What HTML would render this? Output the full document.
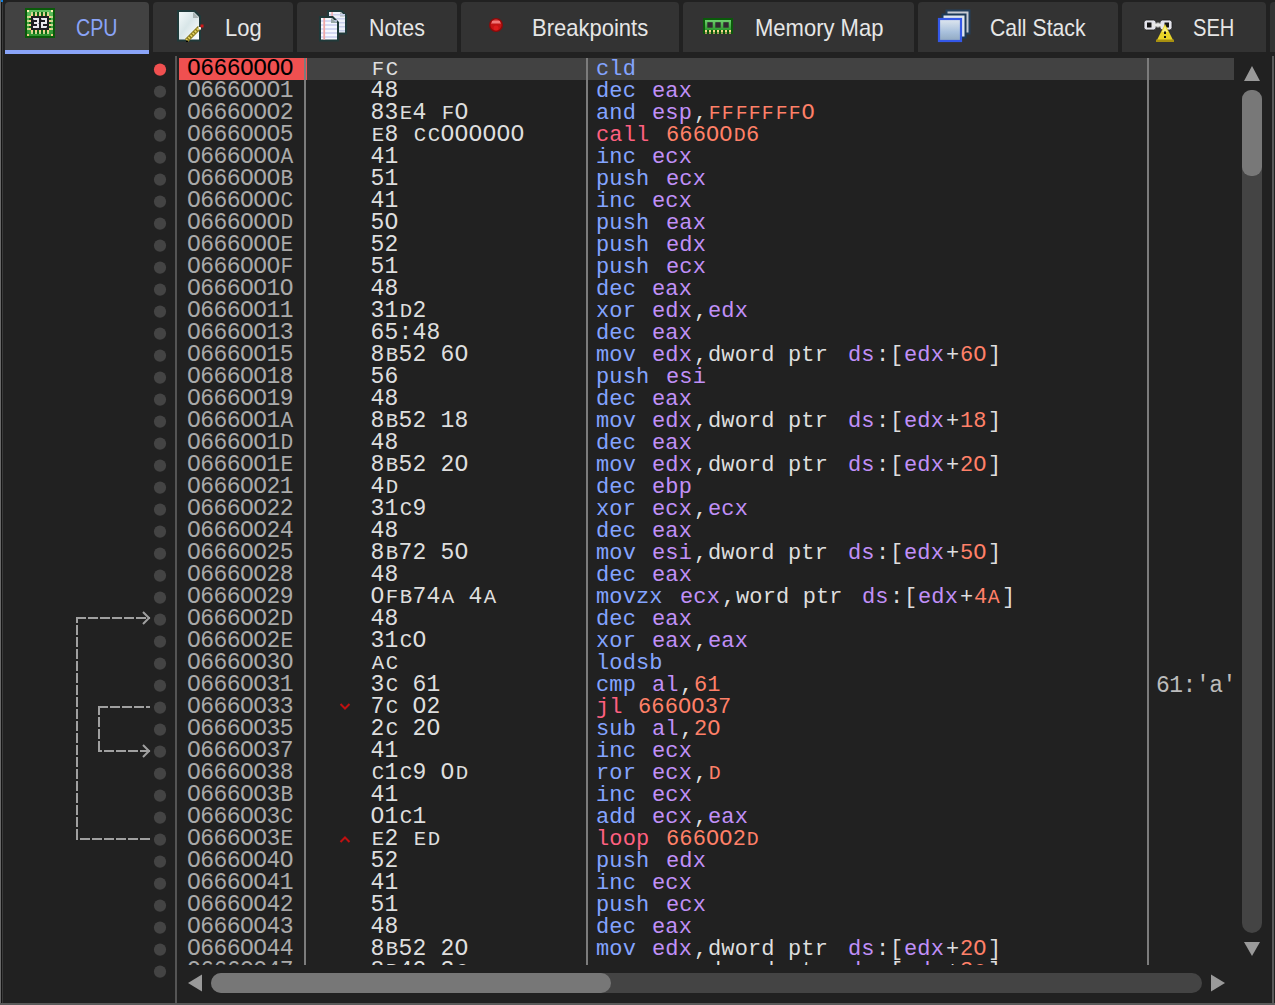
<!DOCTYPE html>
<html><head><meta charset="utf-8">
<style>
html,body{margin:0;padding:0;}
body{width:1275px;height:1005px;background:#212121;position:relative;overflow:hidden;font-family:"Liberation Sans",sans-serif;}
.abs{position:absolute;}
.tab{position:absolute;top:2px;height:50px;background:#333333;border-radius:4px 4px 0 0;}
.tab.act{background:#424242;height:48px;}
.tl{position:absolute;top:15px;font-family:"Liberation Sans",sans-serif;font-size:24px;transform-origin:0 0;line-height:26px;color:#e6e6e6;white-space:pre;}
#tbl{position:absolute;left:0;top:0;width:1240px;height:965px;overflow:hidden;}
.a,.b,.d,.c{position:absolute;font-family:"Liberation Mono",monospace;font-size:23px;line-height:22px;height:22px;white-space:pre;}
.a{left:187px;color:#aaaaaa;letter-spacing:-0.55px;}
.b{left:370.5px;color:#dedede;letter-spacing:0.2px;}
.d{left:596px;color:#dedede;letter-spacing:0.13px;font-size:22px;margin-top:1px;}
.tk{display:inline-block;overflow:visible;}
.sc{display:inline-block;transform:scale(0.9,0.9);transform-origin:50% 17px;}
.a .sc{transform:scale(0.92,0.92);}
.mn{color:#84a4ff;}
.reg{color:#c090f8;}
.num{color:#ff8068;}
.cj{color:#ff6080;}
.pu{color:#dedede;}
</style></head><body>
<!-- left border -->
<div class="abs" style="left:0;top:0;width:1px;height:1005px;background:#6a6a6a"></div>
<div class="abs" style="left:1px;top:0;width:1px;height:1005px;background:#141414"></div>
<div class="abs" style="left:2px;top:0;width:1px;height:1005px;background:#3a3a3a"></div>
<div class="abs" style="left:1px;top:0;width:2px;height:2px;background:#1080e0"></div>
<!-- bottom border / right border -->
<div class="abs" style="left:0;top:1003px;width:1275px;height:2px;background:#5a5a5a"></div>
<div class="abs" style="left:1272px;top:56px;width:1.5px;height:949px;background:#5a5a5a"></div>

<!-- tabs -->
<div class="tab act" style="left:5px;width:144px"></div>
<div class="abs" style="left:5px;top:50px;width:144px;height:4px;background:#8aa4f8"></div>
<div class="tab" style="left:153px;width:140px"></div>
<div class="tab" style="left:297px;width:160px"></div>
<div class="tab" style="left:461px;width:218px"></div>
<div class="tab" style="left:683px;width:231px"></div>
<div class="tab" style="left:918px;width:200px"></div>
<div class="tab" style="left:1122px;width:144px"></div>
<div class="tab" style="left:1270px;width:20px"></div>

<div class="tl" style="left:76px;color:#8aa4f8;transform:scaleX(0.819)">CPU</div>
<div class="tl" style="left:225px;transform:scaleX(0.917)">Log</div>
<div class="tl" style="left:368.5px;transform:scaleX(0.892)">Notes</div>
<div class="tl" style="left:532.2px;transform:scaleX(0.917)">Breakpoints</div>
<div class="tl" style="left:754.5px;transform:scaleX(0.917)">Memory Map</div>
<div class="tl" style="left:990px;transform:scaleX(0.885)">Call Stack</div>
<div class="tl" style="left:1192.8px;transform:scaleX(0.838)">SEH</div>

<!-- icons -->
<svg class="abs" style="left:0;top:0" width="1275" height="56" viewBox="0 0 1275 56">
 <defs>
  <linearGradient id="gpage" x1="0" y1="0" x2="1" y2="1"><stop offset="0" stop-color="#f4fafa"/><stop offset="0.45" stop-color="#d8e6e8"/><stop offset="1" stop-color="#ffffff"/></linearGradient>
  <linearGradient id="gcs" x1="0" y1="0" x2="0" y2="1"><stop offset="0" stop-color="#e0e8f0"/><stop offset="0.6" stop-color="#a8c0dc"/><stop offset="1" stop-color="#90a8c0"/></linearGradient>
  <linearGradient id="gram" x1="0" y1="0" x2="0" y2="1"><stop offset="0" stop-color="#70d070"/><stop offset="1" stop-color="#2e9a2e"/></linearGradient>
  <linearGradient id="gcpu" x1="0" y1="0" x2="0" y2="1"><stop offset="0" stop-color="#60c060"/><stop offset="1" stop-color="#2e942e"/></linearGradient>
 </defs>
 <!-- CPU -->
 <rect x="25" y="8" width="30" height="30" fill="#0a5a0a"/>
 <rect x="27" y="10" width="26" height="26" fill="url(#gcpu)"/>
 <g fill="#0e6a14">
  <rect x="33" y="12" width="2" height="4"/><rect x="37" y="12" width="2" height="4"/><rect x="41" y="12" width="2" height="4"/><rect x="45" y="12" width="2" height="4"/>
  <rect x="33" y="30" width="2" height="4"/><rect x="37" y="30" width="2" height="4"/><rect x="41" y="30" width="2" height="4"/><rect x="45" y="30" width="2" height="4"/>
  <rect x="29" y="18" width="2" height="2"/><rect x="29" y="22" width="2" height="2"/><rect x="29" y="26" width="2" height="2"/>
  <rect x="49" y="18" width="2" height="2"/><rect x="49" y="22" width="2" height="2"/><rect x="49" y="26" width="2" height="2"/>
 </g>
 <g fill="#fff0b0"><rect x="27" y="10" width="2" height="2"/><rect x="51" y="10" width="2" height="2"/></g>
 <g fill="#f0c888"><rect x="27" y="34" width="2" height="2"/><rect x="51" y="34" width="2" height="2"/></g>
 <g fill="#c8d890">
  <rect x="31" y="12" width="2" height="2"/><rect x="35" y="12" width="2" height="2"/><rect x="39" y="12" width="2" height="2"/><rect x="43" y="12" width="2" height="2"/><rect x="47" y="12" width="2" height="2"/>
  <rect x="31" y="32" width="2" height="2"/><rect x="35" y="32" width="2" height="2"/><rect x="39" y="32" width="2" height="2"/><rect x="43" y="32" width="2" height="2"/><rect x="47" y="32" width="2" height="2"/>
  <rect x="27" y="16" width="2" height="2"/><rect x="27" y="20" width="2" height="2"/><rect x="27" y="24" width="2" height="2"/><rect x="27" y="28" width="2" height="2"/>
  <rect x="51" y="16" width="2" height="2"/><rect x="51" y="20" width="2" height="2"/><rect x="51" y="24" width="2" height="2"/><rect x="51" y="28" width="2" height="2"/>
 </g>
 <g fill="#f4d090">
  <rect x="31" y="14" width="2" height="2"/><rect x="35" y="14" width="2" height="2"/><rect x="39" y="14" width="2" height="2"/><rect x="43" y="14" width="2" height="2"/><rect x="47" y="14" width="2" height="2"/>
  <rect x="31" y="30" width="2" height="2"/><rect x="35" y="30" width="2" height="2"/><rect x="39" y="30" width="2" height="2"/><rect x="43" y="30" width="2" height="2"/><rect x="47" y="30" width="2" height="2"/>
  <rect x="29" y="16" width="2" height="2"/><rect x="29" y="20" width="2" height="2"/><rect x="29" y="24" width="2" height="2"/><rect x="29" y="28" width="2" height="2"/>
  <rect x="49" y="16" width="2" height="2"/><rect x="49" y="20" width="2" height="2"/><rect x="49" y="24" width="2" height="2"/><rect x="49" y="28" width="2" height="2"/>
 </g>
 <rect x="31" y="16" width="18" height="14" fill="#1e1e22"/>
 <g fill="#e8e8ec">
  <rect x="33" y="18" width="6" height="2"/><rect x="34" y="22" width="5" height="2"/><rect x="33" y="26" width="6" height="2"/><rect x="37" y="18" width="2" height="10"/>
  <rect x="41" y="18" width="6" height="2"/><rect x="45" y="18" width="2" height="6"/><rect x="41" y="22" width="6" height="2"/><rect x="41" y="22" width="2" height="6"/><rect x="41" y="26" width="6" height="2"/>
 </g>
 <g fill="#9a9aa0"><rect x="33" y="19" width="1" height="1"/><rect x="38" y="23" width="1" height="1"/><rect x="41" y="19" width="1" height="1"/><rect x="46" y="27" width="1" height="1"/></g>
 <!-- Log -->
 <path d="M177 10 H195 L201 16 V41.5 H177 Z" fill="#203a3a"/>
 <path d="M179 12 H194 L199 17 V39.5 H179 Z" fill="url(#gpage)"/>
 <path d="M193 12 V18 H199 Z" fill="#a8b4b4"/>
 <path d="M186.5 40.5 L199.5 27.5" stroke="#8a7a20" stroke-width="4.5"/>
 <path d="M186.5 40.5 L199.5 27.5" stroke="#e8d860" stroke-width="2.5" stroke-dasharray="1.5 1.5"/>
 <rect x="198.5" y="27" width="2.5" height="2.5" fill="#ffffff"/>
 <rect x="200.5" y="24.5" width="3" height="3" fill="#d01818"/>
 <rect x="186" y="40.5" width="2" height="1.5" fill="#000"/>
 <!-- Notes -->
 <path d="M327 10 H342 L347 15 V34.5 H327 Z" fill="#203a3a"/>
 <path d="M329 12 H341 L345 16 V32.5 H329 Z" fill="#eef2fa"/>
 <path d="M340 12 V16.5 H345 Z" fill="#a8b4b4"/>
 <g fill="#c8d0ec"><rect x="329" y="14" width="16" height="1.5"/><rect x="329" y="18" width="16" height="1.5"/><rect x="329" y="22" width="16" height="1.5"/><rect x="329" y="26" width="16" height="1.5"/><rect x="329" y="30" width="16" height="1.5"/></g>
 <rect x="331.3" y="12" width="1.6" height="5" fill="#f0b0b0"/>
 <path d="M319 16 H333 L339 22 V41.5 H319 Z" fill="#203a3a"/>
 <path d="M321 18 H332 L337 23 V39.5 H321 Z" fill="#f6f8ff"/>
 <g fill="#ccd2f0"><rect x="321" y="20.2" width="16" height="1.6"/><rect x="321" y="24.2" width="16" height="1.6"/><rect x="321" y="28.2" width="16" height="1.6"/><rect x="321" y="32.2" width="16" height="1.6"/><rect x="321" y="36.2" width="16" height="1.6"/></g>
 <path d="M331 18 V23 H337 Z" fill="#98a8a8"/>
 <rect x="323.3" y="18" width="1.8" height="21.5" fill="#f0a8a8"/>
 <!-- Breakpoints -->
 <circle cx="496" cy="25" r="7" fill="#8c0a0a"/>
 <circle cx="496" cy="25" r="5.6" fill="#c41414"/>
 <path d="M491 24 A5 4.5 0 0 1 501 24 Z" fill="#d84848"/>
 <rect x="492" y="21" width="8" height="2" fill="#f07878"/>
 <circle cx="496" cy="28" r="2.5" fill="#dc1c1c"/>
 <!-- Memory Map -->
 <rect x="703" y="18" width="30" height="16" fill="#0a5a0a"/>
 <rect x="705" y="20" width="26" height="10" fill="url(#gram)"/>
 <rect x="707.3" y="22.2" width="5.4" height="5.5" fill="#302830"/><rect x="715.3" y="22.2" width="5.4" height="5.5" fill="#302830"/><rect x="723.3" y="22.2" width="5.4" height="5.5" fill="#302830"/>
 <g fill="#f8d890"><rect x="705" y="30" width="2" height="2.5"/><rect x="709" y="30" width="2" height="2.5"/><rect x="713" y="30" width="2" height="2.5"/><rect x="717" y="30" width="2" height="2.5"/><rect x="721" y="30" width="2" height="2.5"/><rect x="725" y="30" width="2" height="2.5"/><rect x="729" y="30" width="2" height="2.5"/></g>
 <g fill="#a89860"><rect x="705" y="32.5" width="2" height="1.5"/><rect x="709" y="32.5" width="2" height="1.5"/><rect x="713" y="32.5" width="2" height="1.5"/><rect x="717" y="32.5" width="2" height="1.5"/><rect x="721" y="32.5" width="2" height="1.5"/><rect x="725" y="32.5" width="2" height="1.5"/><rect x="729" y="32.5" width="2" height="1.5"/></g>
 <!-- Call Stack -->
 <rect x="946.5" y="10.5" width="23" height="23" fill="#c8ccd4" stroke="#24405c" stroke-width="2"/>
 <rect x="942.5" y="14.5" width="23" height="23" fill="#dfe6ee" stroke="#1c3a58" stroke-width="2"/>
 <rect x="939" y="19" width="22" height="22" fill="url(#gcs)" stroke="#3458e8" stroke-width="2.2"/>
 <!-- SEH -->
 <rect x="1152" y="22.5" width="10" height="5" fill="#b8b8b8"/>
 <rect x="1144" y="20" width="12" height="10" rx="2.5" fill="#e4e4ec" stroke="#202020" stroke-width="0.8"/>
 <rect x="1160" y="20" width="12" height="10" rx="2.5" fill="#e4e4ec" stroke="#202020" stroke-width="0.8"/>
 <rect x="1147" y="22.5" width="4.5" height="5" fill="#141414"/>
 <rect x="1164.5" y="22.5" width="4.5" height="5" fill="#141414"/>
 <rect x="1152" y="23.5" width="10" height="3" fill="#e8e8e8"/>
 <path d="M1156 42 L1165 24 L1174 42 Z" fill="#e8d428"/>
 <path d="M1162 32 L1165 26 L1168 32 Z" fill="#f8f080"/>
 <rect x="1156" y="39.5" width="18" height="2.5" fill="#a89010"/>
 <rect x="1164" y="31.5" width="2" height="2.5" fill="#101010"/><rect x="1164" y="36" width="2" height="2" fill="#101010"/>
</svg>

<!-- table area -->
<div class="abs" style="left:175px;top:56px;width:2px;height:947px;background:#555555"></div>
<div class="abs" style="left:179px;top:58px;width:128px;height:22px;background:#f05050"></div>
<div class="abs" style="left:307px;top:58px;width:927px;height:22px;background:#424242"></div>
<div id="tbl">
<div class="a" style="top:58px;color:#000">O666OOOO</div>
<div class="b" style="top:58px"><span class="sc">F</span><span class="sc">C</span></div>
<div class="d" style="top:58px"><span class="tk mn" style="width:42px">cld</span></div>
<div class="a" style="top:80px">O666OOO1</div>
<div class="b" style="top:80px">48</div>
<div class="d" style="top:80px"><span class="tk mn" style="width:42px">dec</span><span class="tk" style="width:14px"> </span><span class="tk reg" style="width:42px">eax</span></div>
<div class="a" style="top:102px">O666OOO2</div>
<div class="b" style="top:102px">83<span class="sc">E</span>4 <span class="sc">F</span>O</div>
<div class="d" style="top:102px"><span class="tk mn" style="width:42px">and</span><span class="tk" style="width:14px"> </span><span class="tk reg" style="width:42px">esp</span><span class="tk pu" style="width:14px">,</span><span class="tk num" style="width:112px"><span class="sc">F</span><span class="sc">F</span><span class="sc">F</span><span class="sc">F</span><span class="sc">F</span><span class="sc">F</span><span class="sc">F</span>O</span></div>
<div class="a" style="top:124px">O666OOO5</div>
<div class="b" style="top:124px"><span class="sc">E</span>8 <span class="sc">C</span><span class="sc">C</span>OOOOOO</div>
<div class="d" style="top:124px"><span class="tk cj" style="width:56px">call</span><span class="tk" style="width:14px"> </span><span class="tk num" style="width:98px">666OO<span class="sc">D</span>6</span></div>
<div class="a" style="top:146px">O666OOO<span class="sc">A</span></div>
<div class="b" style="top:146px">41</div>
<div class="d" style="top:146px"><span class="tk mn" style="width:42px">inc</span><span class="tk" style="width:14px"> </span><span class="tk reg" style="width:42px">ecx</span></div>
<div class="a" style="top:168px">O666OOO<span class="sc">B</span></div>
<div class="b" style="top:168px">51</div>
<div class="d" style="top:168px"><span class="tk mn" style="width:56px">push</span><span class="tk" style="width:14px"> </span><span class="tk reg" style="width:42px">ecx</span></div>
<div class="a" style="top:190px">O666OOO<span class="sc">C</span></div>
<div class="b" style="top:190px">41</div>
<div class="d" style="top:190px"><span class="tk mn" style="width:42px">inc</span><span class="tk" style="width:14px"> </span><span class="tk reg" style="width:42px">ecx</span></div>
<div class="a" style="top:212px">O666OOO<span class="sc">D</span></div>
<div class="b" style="top:212px">5O</div>
<div class="d" style="top:212px"><span class="tk mn" style="width:56px">push</span><span class="tk" style="width:14px"> </span><span class="tk reg" style="width:42px">eax</span></div>
<div class="a" style="top:234px">O666OOO<span class="sc">E</span></div>
<div class="b" style="top:234px">52</div>
<div class="d" style="top:234px"><span class="tk mn" style="width:56px">push</span><span class="tk" style="width:14px"> </span><span class="tk reg" style="width:42px">edx</span></div>
<div class="a" style="top:256px">O666OOO<span class="sc">F</span></div>
<div class="b" style="top:256px">51</div>
<div class="d" style="top:256px"><span class="tk mn" style="width:56px">push</span><span class="tk" style="width:14px"> </span><span class="tk reg" style="width:42px">ecx</span></div>
<div class="a" style="top:278px">O666OO1O</div>
<div class="b" style="top:278px">48</div>
<div class="d" style="top:278px"><span class="tk mn" style="width:42px">dec</span><span class="tk" style="width:14px"> </span><span class="tk reg" style="width:42px">eax</span></div>
<div class="a" style="top:300px">O666OO11</div>
<div class="b" style="top:300px">31<span class="sc">D</span>2</div>
<div class="d" style="top:300px"><span class="tk mn" style="width:42px">xor</span><span class="tk" style="width:14px"> </span><span class="tk reg" style="width:42px">edx</span><span class="tk pu" style="width:14px">,</span><span class="tk reg" style="width:42px">edx</span></div>
<div class="a" style="top:322px">O666OO13</div>
<div class="b" style="top:322px">65:48</div>
<div class="d" style="top:322px"><span class="tk mn" style="width:42px">dec</span><span class="tk" style="width:14px"> </span><span class="tk reg" style="width:42px">eax</span></div>
<div class="a" style="top:344px">O666OO15</div>
<div class="b" style="top:344px">8<span class="sc">B</span>52 6O</div>
<div class="d" style="top:344px"><span class="tk mn" style="width:42px">mov</span><span class="tk" style="width:14px"> </span><span class="tk reg" style="width:42px">edx</span><span class="tk pu" style="width:14px">,</span><span class="tk pu" style="width:126px">dword ptr</span><span class="tk" style="width:14px"> </span><span class="tk reg" style="width:28px">ds</span><span class="tk pu" style="width:14px">:</span><span class="tk pu" style="width:14px">[</span><span class="tk reg" style="width:42px">edx</span><span class="tk pu" style="width:14px">+</span><span class="tk num" style="width:28px">6O</span><span class="tk pu" style="width:14px">]</span></div>
<div class="a" style="top:366px">O666OO18</div>
<div class="b" style="top:366px">56</div>
<div class="d" style="top:366px"><span class="tk mn" style="width:56px">push</span><span class="tk" style="width:14px"> </span><span class="tk reg" style="width:42px">esi</span></div>
<div class="a" style="top:388px">O666OO19</div>
<div class="b" style="top:388px">48</div>
<div class="d" style="top:388px"><span class="tk mn" style="width:42px">dec</span><span class="tk" style="width:14px"> </span><span class="tk reg" style="width:42px">eax</span></div>
<div class="a" style="top:410px">O666OO1<span class="sc">A</span></div>
<div class="b" style="top:410px">8<span class="sc">B</span>52 18</div>
<div class="d" style="top:410px"><span class="tk mn" style="width:42px">mov</span><span class="tk" style="width:14px"> </span><span class="tk reg" style="width:42px">edx</span><span class="tk pu" style="width:14px">,</span><span class="tk pu" style="width:126px">dword ptr</span><span class="tk" style="width:14px"> </span><span class="tk reg" style="width:28px">ds</span><span class="tk pu" style="width:14px">:</span><span class="tk pu" style="width:14px">[</span><span class="tk reg" style="width:42px">edx</span><span class="tk pu" style="width:14px">+</span><span class="tk num" style="width:28px">18</span><span class="tk pu" style="width:14px">]</span></div>
<div class="a" style="top:432px">O666OO1<span class="sc">D</span></div>
<div class="b" style="top:432px">48</div>
<div class="d" style="top:432px"><span class="tk mn" style="width:42px">dec</span><span class="tk" style="width:14px"> </span><span class="tk reg" style="width:42px">eax</span></div>
<div class="a" style="top:454px">O666OO1<span class="sc">E</span></div>
<div class="b" style="top:454px">8<span class="sc">B</span>52 2O</div>
<div class="d" style="top:454px"><span class="tk mn" style="width:42px">mov</span><span class="tk" style="width:14px"> </span><span class="tk reg" style="width:42px">edx</span><span class="tk pu" style="width:14px">,</span><span class="tk pu" style="width:126px">dword ptr</span><span class="tk" style="width:14px"> </span><span class="tk reg" style="width:28px">ds</span><span class="tk pu" style="width:14px">:</span><span class="tk pu" style="width:14px">[</span><span class="tk reg" style="width:42px">edx</span><span class="tk pu" style="width:14px">+</span><span class="tk num" style="width:28px">2O</span><span class="tk pu" style="width:14px">]</span></div>
<div class="a" style="top:476px">O666OO21</div>
<div class="b" style="top:476px">4<span class="sc">D</span></div>
<div class="d" style="top:476px"><span class="tk mn" style="width:42px">dec</span><span class="tk" style="width:14px"> </span><span class="tk reg" style="width:42px">ebp</span></div>
<div class="a" style="top:498px">O666OO22</div>
<div class="b" style="top:498px">31<span class="sc">C</span>9</div>
<div class="d" style="top:498px"><span class="tk mn" style="width:42px">xor</span><span class="tk" style="width:14px"> </span><span class="tk reg" style="width:42px">ecx</span><span class="tk pu" style="width:14px">,</span><span class="tk reg" style="width:42px">ecx</span></div>
<div class="a" style="top:520px">O666OO24</div>
<div class="b" style="top:520px">48</div>
<div class="d" style="top:520px"><span class="tk mn" style="width:42px">dec</span><span class="tk" style="width:14px"> </span><span class="tk reg" style="width:42px">eax</span></div>
<div class="a" style="top:542px">O666OO25</div>
<div class="b" style="top:542px">8<span class="sc">B</span>72 5O</div>
<div class="d" style="top:542px"><span class="tk mn" style="width:42px">mov</span><span class="tk" style="width:14px"> </span><span class="tk reg" style="width:42px">esi</span><span class="tk pu" style="width:14px">,</span><span class="tk pu" style="width:126px">dword ptr</span><span class="tk" style="width:14px"> </span><span class="tk reg" style="width:28px">ds</span><span class="tk pu" style="width:14px">:</span><span class="tk pu" style="width:14px">[</span><span class="tk reg" style="width:42px">edx</span><span class="tk pu" style="width:14px">+</span><span class="tk num" style="width:28px">5O</span><span class="tk pu" style="width:14px">]</span></div>
<div class="a" style="top:564px">O666OO28</div>
<div class="b" style="top:564px">48</div>
<div class="d" style="top:564px"><span class="tk mn" style="width:42px">dec</span><span class="tk" style="width:14px"> </span><span class="tk reg" style="width:42px">eax</span></div>
<div class="a" style="top:586px">O666OO29</div>
<div class="b" style="top:586px">O<span class="sc">F</span><span class="sc">B</span>74<span class="sc">A</span> 4<span class="sc">A</span></div>
<div class="d" style="top:586px"><span class="tk mn" style="width:70px">movzx</span><span class="tk" style="width:14px"> </span><span class="tk reg" style="width:42px">ecx</span><span class="tk pu" style="width:14px">,</span><span class="tk pu" style="width:112px">word ptr</span><span class="tk" style="width:14px"> </span><span class="tk reg" style="width:28px">ds</span><span class="tk pu" style="width:14px">:</span><span class="tk pu" style="width:14px">[</span><span class="tk reg" style="width:42px">edx</span><span class="tk pu" style="width:14px">+</span><span class="tk num" style="width:28px">4<span class="sc">A</span></span><span class="tk pu" style="width:14px">]</span></div>
<div class="a" style="top:608px">O666OO2<span class="sc">D</span></div>
<div class="b" style="top:608px">48</div>
<div class="d" style="top:608px"><span class="tk mn" style="width:42px">dec</span><span class="tk" style="width:14px"> </span><span class="tk reg" style="width:42px">eax</span></div>
<div class="a" style="top:630px">O666OO2<span class="sc">E</span></div>
<div class="b" style="top:630px">31<span class="sc">C</span>O</div>
<div class="d" style="top:630px"><span class="tk mn" style="width:42px">xor</span><span class="tk" style="width:14px"> </span><span class="tk reg" style="width:42px">eax</span><span class="tk pu" style="width:14px">,</span><span class="tk reg" style="width:42px">eax</span></div>
<div class="a" style="top:652px">O666OO3O</div>
<div class="b" style="top:652px"><span class="sc">A</span><span class="sc">C</span></div>
<div class="d" style="top:652px"><span class="tk mn" style="width:70px">lodsb</span></div>
<div class="a" style="top:674px">O666OO31</div>
<div class="b" style="top:674px">3<span class="sc">C</span> 61</div>
<div class="d" style="top:674px"><span class="tk mn" style="width:42px">cmp</span><span class="tk" style="width:14px"> </span><span class="tk reg" style="width:28px">al</span><span class="tk pu" style="width:14px">,</span><span class="tk num" style="width:28px">61</span></div>
<div class="a" style="top:696px">O666OO33</div>
<div class="b" style="top:696px">7<span class="sc">C</span> O2</div>
<div class="d" style="top:696px"><span class="tk cj" style="width:28px">jl</span><span class="tk" style="width:14px"> </span><span class="tk num" style="width:98px">666OO37</span></div>
<div class="a" style="top:718px">O666OO35</div>
<div class="b" style="top:718px">2<span class="sc">C</span> 2O</div>
<div class="d" style="top:718px"><span class="tk mn" style="width:42px">sub</span><span class="tk" style="width:14px"> </span><span class="tk reg" style="width:28px">al</span><span class="tk pu" style="width:14px">,</span><span class="tk num" style="width:28px">2O</span></div>
<div class="a" style="top:740px">O666OO37</div>
<div class="b" style="top:740px">41</div>
<div class="d" style="top:740px"><span class="tk mn" style="width:42px">inc</span><span class="tk" style="width:14px"> </span><span class="tk reg" style="width:42px">ecx</span></div>
<div class="a" style="top:762px">O666OO38</div>
<div class="b" style="top:762px"><span class="sc">C</span>1<span class="sc">C</span>9 O<span class="sc">D</span></div>
<div class="d" style="top:762px"><span class="tk mn" style="width:42px">ror</span><span class="tk" style="width:14px"> </span><span class="tk reg" style="width:42px">ecx</span><span class="tk pu" style="width:14px">,</span><span class="tk num" style="width:14px"><span class="sc">D</span></span></div>
<div class="a" style="top:784px">O666OO3<span class="sc">B</span></div>
<div class="b" style="top:784px">41</div>
<div class="d" style="top:784px"><span class="tk mn" style="width:42px">inc</span><span class="tk" style="width:14px"> </span><span class="tk reg" style="width:42px">ecx</span></div>
<div class="a" style="top:806px">O666OO3<span class="sc">C</span></div>
<div class="b" style="top:806px">O1<span class="sc">C</span>1</div>
<div class="d" style="top:806px"><span class="tk mn" style="width:42px">add</span><span class="tk" style="width:14px"> </span><span class="tk reg" style="width:42px">ecx</span><span class="tk pu" style="width:14px">,</span><span class="tk reg" style="width:42px">eax</span></div>
<div class="a" style="top:828px">O666OO3<span class="sc">E</span></div>
<div class="b" style="top:828px"><span class="sc">E</span>2 <span class="sc">E</span><span class="sc">D</span></div>
<div class="d" style="top:828px"><span class="tk cj" style="width:56px">loop</span><span class="tk" style="width:14px"> </span><span class="tk num" style="width:98px">666OO2<span class="sc">D</span></span></div>
<div class="a" style="top:850px">O666OO4O</div>
<div class="b" style="top:850px">52</div>
<div class="d" style="top:850px"><span class="tk mn" style="width:56px">push</span><span class="tk" style="width:14px"> </span><span class="tk reg" style="width:42px">edx</span></div>
<div class="a" style="top:872px">O666OO41</div>
<div class="b" style="top:872px">41</div>
<div class="d" style="top:872px"><span class="tk mn" style="width:42px">inc</span><span class="tk" style="width:14px"> </span><span class="tk reg" style="width:42px">ecx</span></div>
<div class="a" style="top:894px">O666OO42</div>
<div class="b" style="top:894px">51</div>
<div class="d" style="top:894px"><span class="tk mn" style="width:56px">push</span><span class="tk" style="width:14px"> </span><span class="tk reg" style="width:42px">ecx</span></div>
<div class="a" style="top:916px">O666OO43</div>
<div class="b" style="top:916px">48</div>
<div class="d" style="top:916px"><span class="tk mn" style="width:42px">dec</span><span class="tk" style="width:14px"> </span><span class="tk reg" style="width:42px">eax</span></div>
<div class="a" style="top:938px">O666OO44</div>
<div class="b" style="top:938px">8<span class="sc">B</span>52 2O</div>
<div class="d" style="top:938px"><span class="tk mn" style="width:42px">mov</span><span class="tk" style="width:14px"> </span><span class="tk reg" style="width:42px">edx</span><span class="tk pu" style="width:14px">,</span><span class="tk pu" style="width:126px">dword ptr</span><span class="tk" style="width:14px"> </span><span class="tk reg" style="width:28px">ds</span><span class="tk pu" style="width:14px">:</span><span class="tk pu" style="width:14px">[</span><span class="tk reg" style="width:42px">edx</span><span class="tk pu" style="width:14px">+</span><span class="tk num" style="width:28px">2O</span><span class="tk pu" style="width:14px">]</span></div>
<div class="a" style="top:960px">O666OO47</div>
<div class="b" style="top:960px">8<span class="sc">B</span>42 3<span class="sc">C</span></div>
<div class="d" style="top:960px"><span class="tk mn" style="width:42px">mov</span><span class="tk" style="width:14px"> </span><span class="tk reg" style="width:42px">eax</span><span class="tk pu" style="width:14px">,</span><span class="tk pu" style="width:126px">dword ptr</span><span class="tk" style="width:14px"> </span><span class="tk reg" style="width:28px">ds</span><span class="tk pu" style="width:14px">:</span><span class="tk pu" style="width:14px">[</span><span class="tk reg" style="width:42px">edx</span><span class="tk pu" style="width:14px">+</span><span class="tk num" style="width:28px">3<span class="sc">C</span></span><span class="tk pu" style="width:14px">]</span></div>
</div>
<div class="abs" style="left:304px;top:58px;width:2px;height:907px;background:#7c7c7c"></div>
<div class="abs" style="left:586px;top:58px;width:2px;height:907px;background:#7c7c7c"></div>
<div class="abs" style="left:1147px;top:58px;width:2px;height:907px;background:#7c7c7c"></div>
<div class="c" style="left:1156px;top:675px;color:#bcbcbc;letter-spacing:-0.5px">61:'a'</div>

<svg class="abs" style="left:0;top:0" width="1275" height="1005" viewBox="0 0 1275 1005">
 <circle cx="160" cy="69.6" r="6.1" fill="#f05050"/><circle cx="160" cy="91.6" r="6.1" fill="#444444"/><circle cx="160" cy="113.6" r="6.1" fill="#444444"/><circle cx="160" cy="135.6" r="6.1" fill="#444444"/><circle cx="160" cy="157.6" r="6.1" fill="#444444"/><circle cx="160" cy="179.6" r="6.1" fill="#444444"/><circle cx="160" cy="201.6" r="6.1" fill="#444444"/><circle cx="160" cy="223.6" r="6.1" fill="#444444"/><circle cx="160" cy="245.6" r="6.1" fill="#444444"/><circle cx="160" cy="267.6" r="6.1" fill="#444444"/><circle cx="160" cy="289.6" r="6.1" fill="#444444"/><circle cx="160" cy="311.6" r="6.1" fill="#444444"/><circle cx="160" cy="333.6" r="6.1" fill="#444444"/><circle cx="160" cy="355.6" r="6.1" fill="#444444"/><circle cx="160" cy="377.6" r="6.1" fill="#444444"/><circle cx="160" cy="399.6" r="6.1" fill="#444444"/><circle cx="160" cy="421.6" r="6.1" fill="#444444"/><circle cx="160" cy="443.6" r="6.1" fill="#444444"/><circle cx="160" cy="465.6" r="6.1" fill="#444444"/><circle cx="160" cy="487.6" r="6.1" fill="#444444"/><circle cx="160" cy="509.6" r="6.1" fill="#444444"/><circle cx="160" cy="531.6" r="6.1" fill="#444444"/><circle cx="160" cy="553.6" r="6.1" fill="#444444"/><circle cx="160" cy="575.6" r="6.1" fill="#444444"/><circle cx="160" cy="597.6" r="6.1" fill="#444444"/><circle cx="160" cy="619.6" r="6.1" fill="#444444"/><circle cx="160" cy="641.6" r="6.1" fill="#444444"/><circle cx="160" cy="663.6" r="6.1" fill="#444444"/><circle cx="160" cy="685.6" r="6.1" fill="#444444"/><circle cx="160" cy="707.6" r="6.1" fill="#444444"/><circle cx="160" cy="729.6" r="6.1" fill="#444444"/><circle cx="160" cy="751.6" r="6.1" fill="#444444"/><circle cx="160" cy="773.6" r="6.1" fill="#444444"/><circle cx="160" cy="795.6" r="6.1" fill="#444444"/><circle cx="160" cy="817.6" r="6.1" fill="#444444"/><circle cx="160" cy="839.6" r="6.1" fill="#444444"/><circle cx="160" cy="861.6" r="6.1" fill="#444444"/><circle cx="160" cy="883.6" r="6.1" fill="#444444"/><circle cx="160" cy="905.6" r="6.1" fill="#444444"/><circle cx="160" cy="927.6" r="6.1" fill="#444444"/><circle cx="160" cy="949.6" r="6.1" fill="#444444"/><circle cx="160" cy="971.6" r="6.1" fill="#444444"/>
 <g fill="none" stroke="#a0a0a0" stroke-width="2" stroke-dasharray="10 2">
  <path d="M76 618 H150"/>
  <path d="M77 839 V617"/>
  <path d="M150 839 H76"/>
  <path d="M98 707 H150"/>
  <path d="M99 751 V706"/>
  <path d="M150 751 H98"/>
 </g>
 <g fill="none" stroke="#a0a0a0" stroke-width="2">
  <path d="M143 612 L149 618 L143 624"/>
  <path d="M143 745 L149 751 L143 757"/>
 </g>
 <g fill="none" stroke="#c01010" stroke-width="2">
  <path d="M340.5 704 L345 708.5 L349.5 704"/>
  <path d="M340.5 842 L345 837.5 L349.5 842"/>
 </g>
 <!-- vertical scrollbar -->
 <path d="M1244 81 L1252 66 L1260 81 Z" fill="#9a9a9a"/>
 <rect x="1242" y="90" width="20" height="843" rx="10" fill="#444444"/>
 <rect x="1242" y="90" width="20" height="86" rx="9" fill="#787878"/>
 <path d="M1244 942 L1260 942 L1252 956 Z" fill="#9a9a9a"/>
 <!-- horizontal scrollbar -->
 <path d="M202 974.5 L188 983 L202 991.5 Z" fill="#9a9a9a"/>
 <rect x="211" y="973" width="991" height="20" rx="10" fill="#444444"/>
 <rect x="211" y="973" width="400" height="20" rx="10" fill="#777777"/>
 <path d="M1211 974.5 L1225 983 L1211 991.5 Z" fill="#9a9a9a"/>
</svg>
</body></html>
